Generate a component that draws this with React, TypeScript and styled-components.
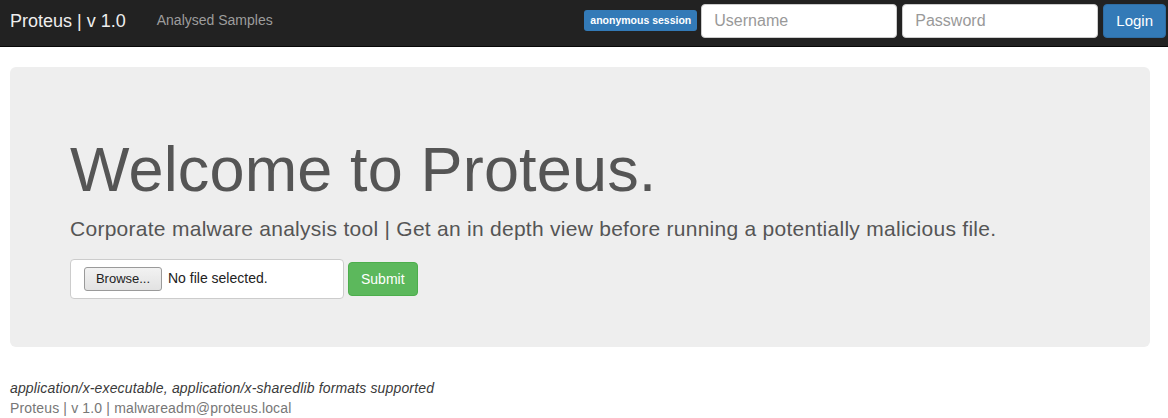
import React from "react";
import styled, { createGlobalStyle } from "styled-components";

const Global = createGlobalStyle`
  html, body { margin: 0; padding: 0; background: #fff; }
  body { font-family: "Liberation Sans", Arial, sans-serif; font-size: 14px; line-height: 1.42857; color: #333; }
  * { box-sizing: border-box; }
`;

const Navbar = styled.nav`
  height: 47px;
  background: #222;
  border-bottom: 1px solid #080808;
  display: flex;
  align-items: center;
  padding: 0 2px 0 10px;
`;

const Brand = styled.span`
  font-size: 18px;
  color: #eee;
  line-height: 20px;
  margin-top: -4px;
`;

const NavLink = styled.span`
  font-size: 14px;
  color: #9d9d9d;
  margin-left: 31px;
  margin-top: -4px;
`;

const Spacer = styled.div`
  flex: 1;
`;

const NavForm = styled.div`
  display: flex;
  align-items: center;
  gap: 5px;
  margin-top: -5px;
`;

const Label = styled.span`
  background: #337ab7;
  color: #fff;
  font-size: 10.5px;
  font-weight: bold;
  border-radius: 3px;
  padding: 3px 6px 4px;
  line-height: 14px;
  margin-right: -1px;
`;

const Input = styled.input`
  width: 196px;
  height: 34px;
  border: 1px solid #ccc;
  border-radius: 4px;
  padding: 6px 12px;
  font-family: "Liberation Sans", Arial, sans-serif;
  font-size: 16px;
  color: #555;
  background: #fff;
  &::placeholder { color: #999; }
`;

const Button = styled.button<{ $variant: "primary" | "success" }>`
  height: 34px;
  border-radius: 4px;
  padding: 6px 12px;
  font-family: "Liberation Sans", Arial, sans-serif;
  font-size: ${(p) => (p.$variant === "primary" ? "15px" : "14px")};
  color: #fff;
  cursor: pointer;
  background: ${(p) => (p.$variant === "primary" ? "#337ab7" : "#5cb85c")};
  border: 1px solid ${(p) => (p.$variant === "primary" ? "#2e6da4" : "#4cae4c")};
`;

const Jumbotron = styled.section`
  width: 1140px;
  margin: 20px 0 31px 10px;
  background: #eee;
  border-radius: 6px;
  padding: 48px 60px;
  color: #555;
`;

const Title = styled.h1`
  font-size: 63px;
  font-weight: 500;
  line-height: 1.1;
  margin: 20px 0 10px;
  letter-spacing: 0.15px;
`;

const Lead = styled.p`
  font-size: 21px;
  font-weight: 200;
  line-height: 30px;
  margin: 0 0 15px;
  letter-spacing: 0.27px;
`;

const UploadRow = styled.div`
  display: flex;
  align-items: center;
  gap: 4px;
`;

const FileBox = styled.div`
  width: 274px;
  height: 40px;
  background: #fff;
  border: 1px solid #ccc;
  border-radius: 4px;
  display: flex;
  align-items: center;
  padding: 0 13px;
  gap: 6px;
  font-size: 14px;
  color: #222;
`;

const Browse = styled.span`
  height: 24px;
  width: 78px;
  border: 1px solid #9a9a9a;
  border-radius: 3px;
  background: linear-gradient(#f2f2f2, #e2e2e2);
  display: flex;
  align-items: center;
  justify-content: center;
  font-size: 13px;
  color: #222;
`;

const Footer = styled.footer`
  padding: 0 10px;
  line-height: 20px;
  letter-spacing: 0.15px;
`;

const Formats = styled.div`
  font-style: italic;
  color: #3a3a3a;
`;

const Credits = styled.div`
  color: #777;
`;

export default function App() {
  return (
    <>
      <Global />
      <Navbar>
        <Brand>Proteus | v 1.0</Brand>
        <NavLink>Analysed Samples</NavLink>
        <Spacer />
        <NavForm>
          <Label>anonymous session</Label>
          <Input placeholder="Username" />
          <Input type="password" placeholder="Password" />
          <Button $variant="primary">Login</Button>
        </NavForm>
      </Navbar>
      <Jumbotron>
        <Title>Welcome to Proteus.</Title>
        <Lead>
          Corporate malware analysis tool | Get an in depth view before running a potentially malicious file.
        </Lead>
        <UploadRow>
          <FileBox>
            <Browse>Browse...</Browse>
            <span>No file selected.</span>
          </FileBox>
          <Button $variant="success">Submit</Button>
        </UploadRow>
      </Jumbotron>
      <Footer>
        <Formats>application/x-executable, application/x-sharedlib formats supported</Formats>
        <Credits>Proteus | v 1.0 | malwareadm@proteus.local</Credits>
      </Footer>
    </>
  );
}
